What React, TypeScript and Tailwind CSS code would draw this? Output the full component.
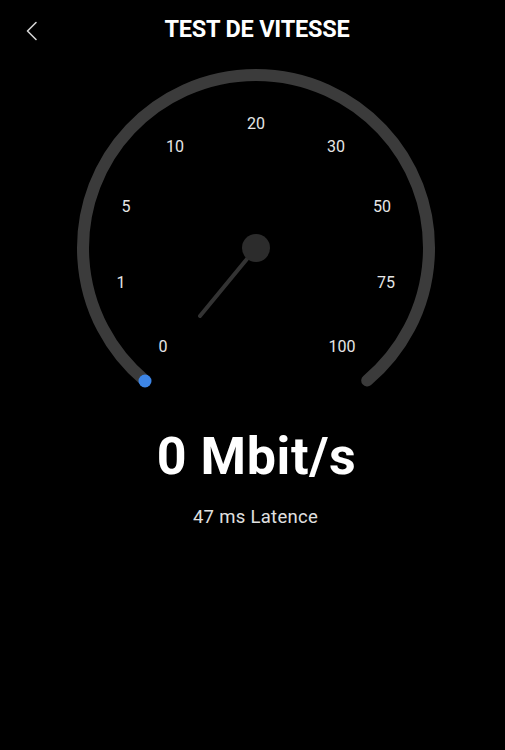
import React from "react";

const ticks = [
  { label: "0", x: 163, y: 346 },
  { label: "1", x: 121, y: 282 },
  { label: "5", x: 126, y: 206 },
  { label: "10", x: 175, y: 146 },
  { label: "20", x: 256, y: 123 },
  { label: "30", x: 336, y: 146 },
  { label: "50", x: 382, y: 206 },
  { label: "75", x: 386, y: 282 },
  { label: "100", x: 342, y: 346 },
];

function Gauge() {
  // centre (256, 248), radius 173, 280 degree sweep
  return (
    <svg width={505} height={340} viewBox="0 60 505 340" className="block">
      <path
        d="M 144.8 380.5 A 173 173 0 1 1 367.2 380.5"
        fill="none"
        stroke="#3b3b3b"
        strokeWidth={12}
        strokeLinecap="round"
      />
      <circle cx={145} cy={381} r={6.5} fill="#3d85e6" />

      {ticks.map((t) => (
        <text
          key={t.label}
          x={t.x}
          y={t.y}
          textAnchor="middle"
          dominantBaseline="central"
          fill="#e6e6e6"
          fontSize={16}
          fontFamily="Roboto, 'Noto Sans', sans-serif"
        >
          {t.label}
        </text>
      ))}

      {/* Needle */}
      <line
        x1={256}
        y1={248}
        x2={200}
        y2={316}
        stroke="#333333"
        strokeWidth={4}
        strokeLinecap="round"
      />
      <circle cx={256} cy={248} r={14} fill="#2c2c2c" />
    </svg>
  );
}

export default function App() {
  return (
    <div className="w-[505px] h-[750px] bg-black text-white overflow-hidden font-['Roboto',sans-serif]">
      {/* Header */}
      <div className="relative h-[60px] flex items-center justify-center">
        <button className="absolute left-[22px] top-[16px] w-[20px] h-[30px] flex items-center justify-center">
          <svg width={12} height={20} viewBox="0 0 12 20">
            <path
              d="M 10 1.5 L 1.5 10 L 10 18.5"
              fill="none"
              stroke="#d4d4d4"
              strokeWidth={1.6}
              strokeLinecap="round"
              strokeLinejoin="round"
            />
          </svg>
        </button>
        <h1 className="text-[23.5px] font-bold tracking-[-0.2px] leading-none -mt-[1px] pl-[9px]">
          TEST DE VITESSE
        </h1>
      </div>

      {/* Gauge */}
      <Gauge />

      {/* Result */}
      <div className="flex flex-col items-center mt-[31px]">
        <div className="text-[52px] font-bold leading-none tracking-[0.6px] pl-[8px]">
          0 Mbit/s
        </div>
        <div className="mt-[25px] text-[18.5px] text-[#e0e0e0] leading-none tracking-[0.3px] pl-[6px]">
          47 ms Latence
        </div>
      </div>
    </div>
  );
}
